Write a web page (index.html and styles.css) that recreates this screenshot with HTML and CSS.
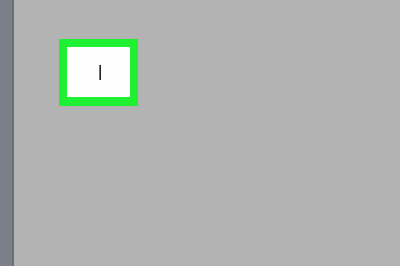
FILE: index.html
```html
<!DOCTYPE html>
<html>
<head>
    <meta charset="UTF-8">
    <title>文本框</title>
    <link rel="stylesheet" href="styles.css">
</head>
<body>
<div class="screen">
    <div class="sidebar"></div>
    <div class="canvas">
        <div class="box">
            <div class="field"><span class="caret"></span></div>
        </div>
    </div>
</div>
</body>
</html>
```

FILE: styles.css
```css
html, body {
    margin: 0;
    padding: 0;
}

.screen {
    display: flex;
    width: 400px;
    height: 266px;
    background: #b3b3b3;
}

.sidebar {
    width: 12px;
    background: #7b7f88;
    border-right: 2px solid #6c6f76;
}

.canvas {
    flex: 1;
    padding: 39px 0 0 45px;
}

.box {
    width: 63px;
    height: 50px;
    border: 8px solid #1ff032;
    border-bottom-width: 9px;
}

.field {
    height: 100%;
    background: #fefefe;
    display: flex;
    justify-content: center;
    align-items: center;
}

.caret {
    width: 1px;
    height: 15px;
    background: #222;
    border-left: 1px solid #777;
    margin-left: 3px;
}
```
